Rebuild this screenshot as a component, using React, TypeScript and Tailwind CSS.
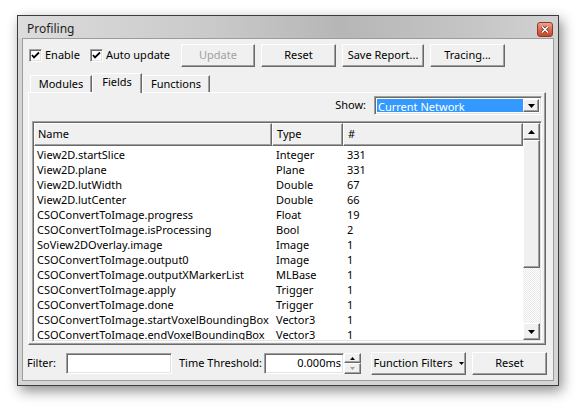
import React from 'react';

const ROWS: [string, string, string][] = [
  ['View2D.startSlice', 'Integer', '331'],
  ['View2D.plane', 'Plane', '331'],
  ['View2D.lutWidth', 'Double', '67'],
  ['View2D.lutCenter', 'Double', '66'],
  ['CSOConvertToImage.progress', 'Float', '19'],
  ['CSOConvertToImage.isProcessing', 'Bool', '2'],
  ['SoView2DOverlay.image', 'Image', '1'],
  ['CSOConvertToImage.output0', 'Image', '1'],
  ['CSOConvertToImage.outputXMarkerList', 'MLBase', '1'],
  ['CSOConvertToImage.apply', 'Trigger', '1'],
  ['CSOConvertToImage.done', 'Trigger', '1'],
  ['CSOConvertToImage.startVoxelBoundingBox', 'Vector3', '1'],
  ['CSOConvertToImage.endVoxelBoundingBox', 'Vector3', '1'],
];

// classic raised 3D edge
const RAISED =
  'bg-[#f0f0f0] border border-t-white border-l-white border-r-[#696969] border-b-[#696969] shadow-[inset_-1px_-1px_0_#a0a0a0]';
// classic sunken edge
const SUNKEN =
  'border border-t-[#a0a0a0] border-l-[#a0a0a0] border-r-white border-b-white shadow-[inset_1px_1px_0_#696969,inset_-1px_-1px_0_#e3e3e3]';

const Button = ({ className, children, disabled }: { className: string; children: React.ReactNode; disabled?: boolean }) => (
  <div
    className={`h-[23px] flex items-center justify-center ${RAISED} ${className} ${
      disabled ? 'text-[#a0a0a0]' : 'text-black'
    }`}
  >
    {children}
  </div>
);

const Check = () => (
  <div className={`w-[13px] h-[13px] bg-white ${SUNKEN} flex items-center justify-center`}>
    <svg width="9" height="9" viewBox="0 0 9 9">
      <path d="M1 4 L3 6.5 L8 1.5" fill="none" stroke="#000" strokeWidth="1.8" />
    </svg>
  </div>
);

const Arrow = ({ up }: { up?: boolean }) => (
  <svg width="7" height="4" viewBox="0 0 7 4">
    <path d={up ? 'M0 4 L3.5 0 L7 4 Z' : 'M0 0 L7 0 L3.5 4 Z'} fill="#000" />
  </svg>
);

const Tab = ({ label, active, w }: { label: string; active?: boolean; w: string }) => (
  <div
    className={`${w} flex items-center justify-center bg-[#f0f0f0] border-t border-l border-t-white border-l-white rounded-tl-[2px] shadow-[inset_-1px_0_0_#a0a0a0] border-r border-r-[#696969] ${
      active ? 'h-[20px] -mb-[1px] relative z-10 pb-[3px]' : 'h-[17px] pt-[1px]'
    }`}
  >
    {label}
  </div>
);

export default function App() {
  return (
    <div className="w-[580px] h-[410px] bg-white pt-[15px] pl-[17px] font-['Noto_Sans',sans-serif] text-[11px] text-black">
      {/* window */}
      <div className="w-[542px] h-[371px] border border-[#3c3c3c] bg-[#d4d5d7] shadow-[3px_5px_12px_rgba(0,0,0,0.45)] flex flex-col">
        {/* title bar */}
        <div className="h-[22px] flex items-start bg-[linear-gradient(90deg,#dcdcdc_0%,#cacaca_35%,#b6b6b6_60%,#c6c6c6_85%,#d2d2d2_100%)]">
          <div className="pl-[9px] pt-[4px] text-[12px] text-[#1e1e1e]">Profiling</div>
          <div className="ml-auto mr-[5px] mt-[6px] w-[16px] h-[15px] rounded-[3px] border border-[#8b3a2b] bg-[linear-gradient(180deg,#eea38f_0%,#dd6b51_50%,#c9452c_100%)] flex items-center justify-center">
            <svg width="8" height="7" viewBox="0 0 8 7">
              <path d="M1 0.5 L7 6.5 M7 0.5 L1 6.5" stroke="#5a2a22" strokeWidth="3" />
              <path d="M1 0.5 L7 6.5 M7 0.5 L1 6.5" stroke="#fff" strokeWidth="1.6" />
            </svg>
          </div>
        </div>

        {/* client */}
        <div className="mx-[4px] w-[532px] h-[343px] border border-[#9c9c9c] bg-[#f0f0f0] pt-[5px] flex flex-col">
          {/* toolbar row */}
          <div className="h-[23px] flex items-center pl-[6px]">
            <div className="w-[61px] flex items-center gap-[3px]">
              <Check />
              <span>Enable</span>
            </div>
            <div className="w-[91px] flex items-center gap-[3px]">
              <Check />
              <span>Auto update</span>
            </div>
            <Button className="w-[74px]" disabled>
              Update
            </Button>
            <Button className="w-[75px] ml-[6px]">Reset</Button>
            <Button className="w-[82px] ml-[6px]">Save Report...</Button>
            <Button className="w-[75px] ml-[6px]">Tracing...</Button>
          </div>

          {/* tabs */}
          <div className="mt-[6px] h-[19px] flex items-end pl-[7px]">
            <Tab label="Modules" w="w-[62px]" />
            <Tab label="Fields" w="w-[50px]" active />
            <Tab label="Functions" w="w-[68px]" />
          </div>

          {/* tab pane */}
          <div className={`ml-[5px] w-[518px] h-[253px] ${RAISED} px-[3px] pt-[3px] flex flex-col`}>
            <div className="h-[19px] flex items-center justify-end">
              <span className="mr-[8px]">Show:</span>
              <div className={`w-[168px] h-[19px] bg-white ${SUNKEN} flex items-stretch p-[2px]`}>
                <div className="flex-1 bg-[#3399ff] text-white pl-[1px] leading-[15px]">Current Network</div>
                <div className={`w-[16px] ${RAISED} flex items-center justify-center`}>
                  <Arrow />
                </div>
              </div>
            </div>

            {/* table */}
            <div className={`mt-[6px] w-[510px] h-[221px] bg-white ${SUNKEN} p-[1px] flex`}>
              <div className="w-[489px] flex flex-col overflow-hidden">
                <div className="h-[23px] flex shrink-0">
                  <div className={`w-[238px] ${RAISED} pl-[3px] flex items-center`}>Name</div>
                  <div className={`w-[71px] ${RAISED} pl-[4px] flex items-center`}>Type</div>
                  <div className={`w-[180px] ${RAISED} pl-[4px] flex items-center`}>#</div>
                </div>
                <div className="pt-[1px]">
                  {ROWS.map(([name, type, n]) => (
                    <div key={name} className="h-[15px] flex items-center whitespace-nowrap leading-[11px]">
                      <div className="w-[238px] pl-[3px]">{name}</div>
                      <div className="w-[71px] pl-[4px]">{type}</div>
                      <div className="w-[180px] pl-[4px]">{n}</div>
                    </div>
                  ))}
                </div>
              </div>
              {/* scrollbar */}
              <div className="w-[17px] flex flex-col">
                <div className={`h-[17px] ${RAISED} flex items-center justify-center`}>
                  <Arrow up />
                </div>
                <div className={`h-[128px] ${RAISED}`} />
                <div className="flex-1 bg-[repeating-conic-gradient(#e8e8e8_0%_25%,#ffffff_0%_50%)] bg-[length:2px_2px]" />
                <div className={`h-[17px] ${RAISED} flex items-center justify-center`}>
                  <Arrow />
                </div>
              </div>
            </div>
          </div>

          {/* bottom row */}
          <div className="mt-[7px] h-[23px] flex items-center pl-[4px]">
            <div className="w-[39px]">Filter:</div>
            <div className={`w-[106px] h-[21px] bg-white ${SUNKEN}`} />
            <div className="ml-[7px] w-[85px]">Time Threshold:</div>
            <div className={`w-[80px] h-[21px] bg-white ${SUNKEN} flex items-center justify-end pr-[2px]`}>0.000ms</div>
            <div className="w-[17px] h-[21px] flex flex-col">
              <div className={`h-[10px] ${RAISED} flex items-center justify-center`}>
                <svg width="5" height="3" viewBox="0 0 5 3">
                  <path d="M0 3 L2.5 0 L5 3 Z" fill="#000" />
                </svg>
              </div>
              <div className={`h-[11px] ${RAISED} flex items-center justify-center`}>
                <svg width="5" height="3" viewBox="0 0 5 3">
                  <path d="M0 0 L5 0 L2.5 3 Z" fill="#a0a0a0" />
                </svg>
              </div>
            </div>
            <Button className="w-[95px] ml-[10px] gap-[6px]">
              <span>Function Filters</span>
              <svg width="5" height="3" viewBox="0 0 5 3">
                <path d="M0 0 L5 0 L2.5 3 Z" fill="#000" />
              </svg>
            </Button>
            <Button className="w-[75px] ml-[6px]">Reset</Button>
          </div>
        </div>
      </div>
    </div>
  );
}
